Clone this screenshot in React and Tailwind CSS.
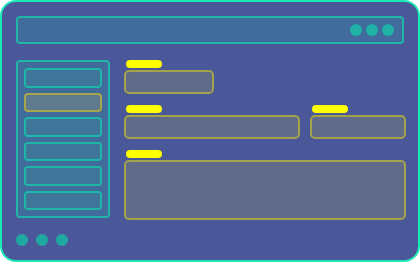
export default function App() {
  const items = [false, true, false, false, false, false];
  return (
    <div className="w-[420px] h-[262px] bg-white">
      <div className="w-[420px] h-[262px] box-border border-2 border-[#1de9b6] rounded-[16px] bg-[#4a5899] pt-[14px] pl-[14px] pr-[12px] flex flex-col">
        {/* top bar */}
        <div className="h-[28px] w-[388px] shrink-0 box-border border-2 border-[#1fb5a8] rounded-[4px] bg-[#406b9c] flex items-center justify-end pr-[8px] gap-[4px]">
          <span className="w-[12px] h-[12px] rounded-full bg-[#20b2a5]" />
          <span className="w-[12px] h-[12px] rounded-full bg-[#20b2a5]" />
          <span className="w-[12px] h-[12px] rounded-full bg-[#20b2a5]" />
        </div>

        <div className="mt-[16px] flex">
          {/* sidebar */}
          <div className="w-[94px] h-[158px] shrink-0 box-border border-2 border-[#1fb5a8] rounded-[4px] bg-[#416b9a] pt-[6px] px-[6px] flex flex-col gap-[5px]">
            {items.map((active, i) => (
              <div
                key={i}
                className={
                  active
                    ? 'h-[19.5px] shrink-0 box-border border-2 border-[#a6a54c] rounded-[4px] bg-[#5f7a8c]'
                    : 'h-[19.5px] shrink-0 box-border border-2 border-[#1fb5a8] rounded-[4px] bg-[#3e7599]'
                }
              />
            ))}
          </div>

          {/* form */}
          <div className="ml-[14px] w-[282px] shrink-0 flex flex-col">
            <div className="ml-[2px] w-[36px] h-[8px] rounded-full bg-[#ffff00]" />
            <div className="mt-[2px] w-[90px] h-[24px] box-border border-2 border-[#a3a34c] rounded-[5px] bg-[#5f6b89]" />

            <div className="mt-[11px] flex gap-[10px]">
              <div className="w-[176px] flex flex-col">
                <div className="ml-[2px] w-[36px] h-[8px] rounded-full bg-[#ffff00]" />
                <div className="mt-[2px] h-[24px] box-border border-2 border-[#a3a34c] rounded-[5px] bg-[#5f6b89]" />
              </div>
              <div className="w-[96px] flex flex-col">
                <div className="ml-[2px] w-[36px] h-[8px] rounded-full bg-[#ffff00]" />
                <div className="mt-[2px] h-[24px] box-border border-2 border-[#a3a34c] rounded-[5px] bg-[#5f6b89]" />
              </div>
            </div>

            <div className="mt-[11px] ml-[2px] w-[36px] h-[8px] rounded-full bg-[#ffff00]" />
            <div className="mt-[2px] h-[60px] box-border border-2 border-[#a3a34c] rounded-[5px] bg-[#5f6b89]" />
          </div>
        </div>

        {/* bottom dots */}
        <div className="mt-[14px] flex gap-[8px]">
          <span className="w-[12px] h-[12px] rounded-full bg-[#1fa8a0]" />
          <span className="w-[12px] h-[12px] rounded-full bg-[#1fa8a0]" />
          <span className="w-[12px] h-[12px] rounded-full bg-[#1fa8a0]" />
        </div>
      </div>
    </div>
  );
}
